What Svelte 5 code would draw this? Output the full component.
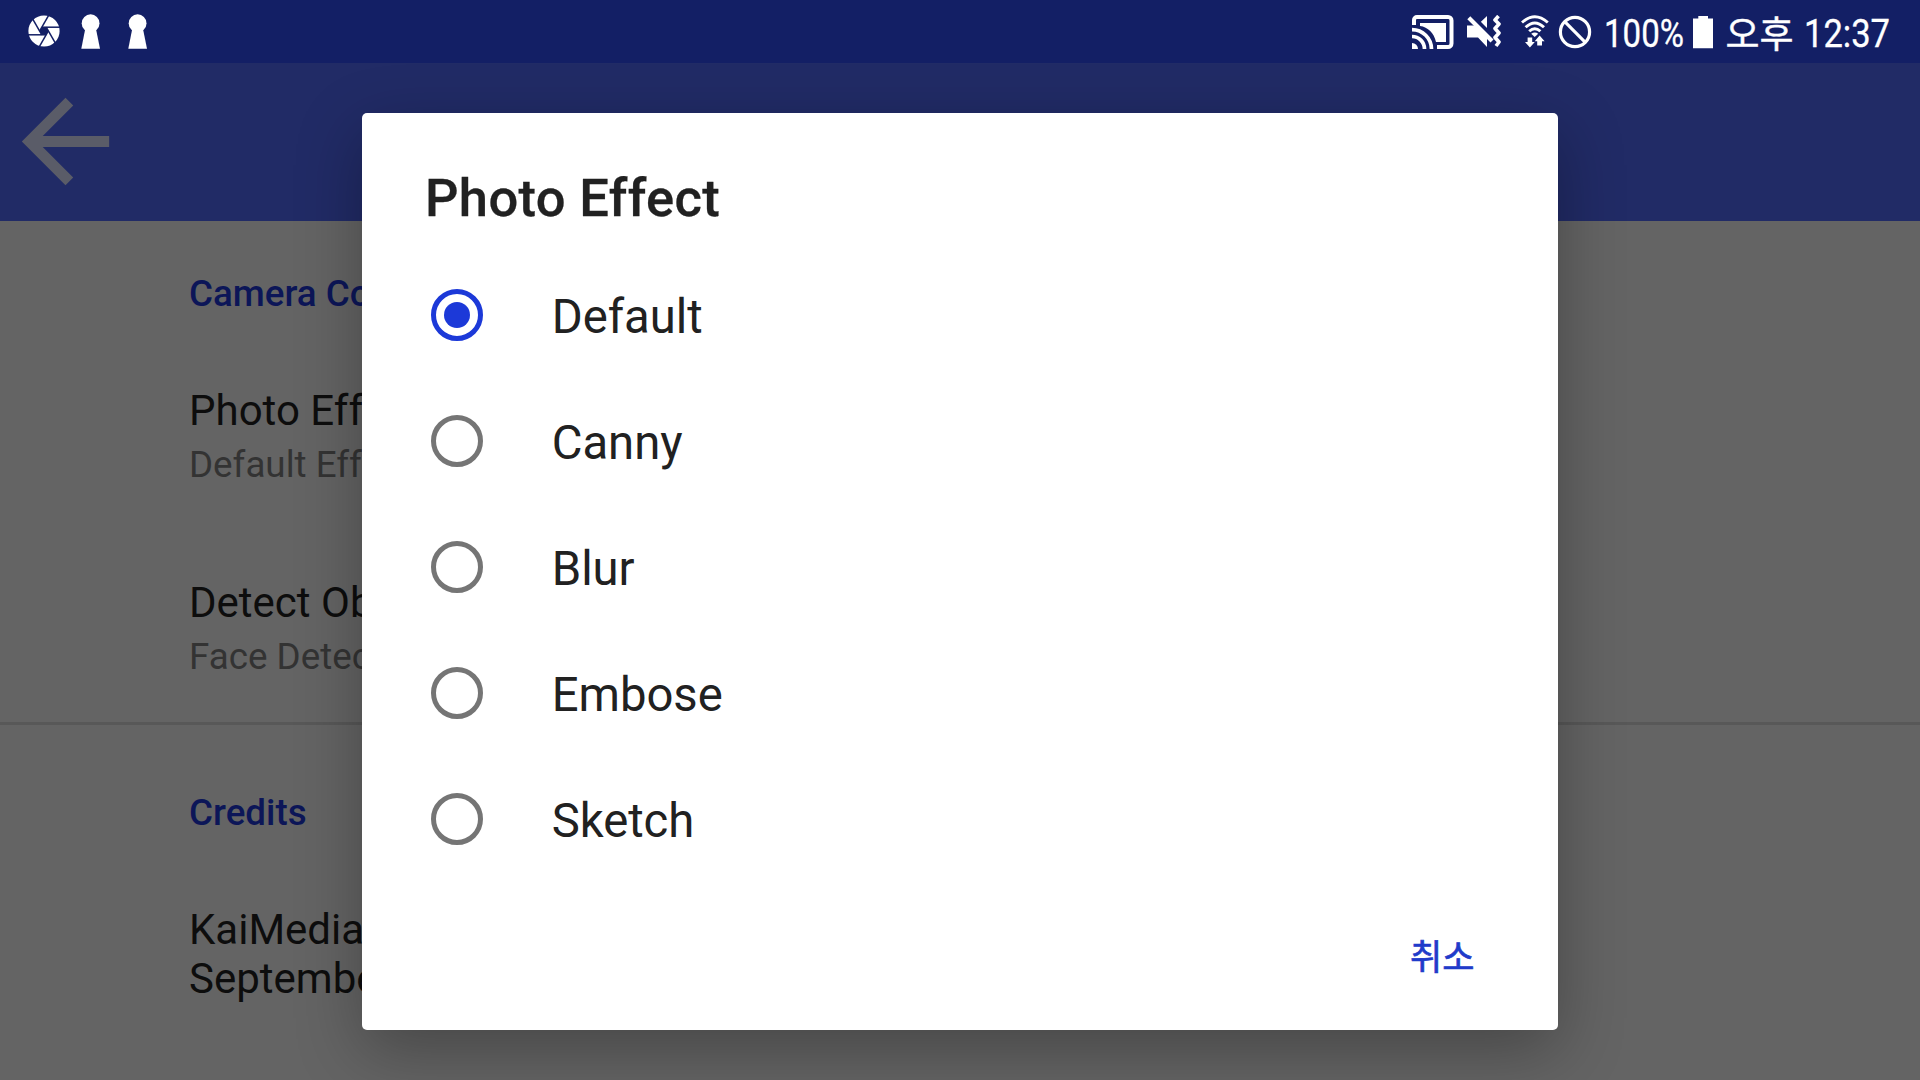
<script>
  const effects = ['Default', 'Canny', 'Blur', 'Embose', 'Sketch'];
  let selected = $state('Default');
</script>

<div class="screen">
  <header class="status">
    <svg class="aperture" width="32" height="32" viewBox="-16 -16 32 32">
      <circle r="15.6" fill="#fff" />
      <polygon points="4.4,0 2.2,3.8 -2.2,3.8 -4.4,0 -2.2,-3.8 2.2,-3.8" fill="#131f65" />
      <g stroke="#131f65" stroke-width="1.5">
        {#each [0, 60, 120, 180, 240, 300] as angle}
          <path d="M-2.2 -3.8H17" transform="rotate({angle})" />
        {/each}
      </g>
    </svg>
    {#each [1, 2] as n (n)}
      <svg class="keyhole" width="20" height="36" viewBox="0 0 20 36" fill="#fff">
        <circle cx="9.6" cy="9.2" r="8.9" />
        <path d="M4.4 14H14.8L19 34.7H.3Z" />
      </svg>
    {/each}
    <span class="spacer"></span>
    <svg class="cast" width="42" height="36" viewBox="0 0 42 36" fill="none" stroke="#fff">
      <path d="M2 10V5a3 3 0 0 1 3-3H36a3.5 3.5 0 0 1 3.5 3.5V28.5A3.5 3.5 0 0 1 36 32H25" stroke-width="4" />
      <path d="M8 8H34V27H24C22 18 16 12 8 11Z" fill="#fff" stroke="none" />
      <path d="M0 14.6A19.6 19.6 0 0 1 19.5 34M0 21.5A12.5 12.5 0 0 1 12.5 34" stroke-width="3.7" />
      <path d="M0 28A6 6 0 0 1 6 34H0Z" fill="#fff" stroke="none" />
    </svg>
    <svg class="mute" width="36" height="34" viewBox="0 0 36 34">
      <path d="M0 10.5H10L20 1V32L11 22.5H0Z" fill="#fff" />
      <path d="M2.5 -1.6L28.5 24.4" stroke="#131f65" stroke-width="4.2" />
      <path d="M1.8 2.8L25 26" stroke="#fff" stroke-width="4.2" />
      <path d="M31.5 1L28 5L32 9L28 13.5L32 18L28 22.5L32 27L29 31" fill="none" stroke="#fff" stroke-width="3.6" stroke-linejoin="round" />
    </svg>
    <svg class="wifi" width="28" height="34" viewBox="0 0 28 34" fill="none" stroke="#fff" stroke-width="2.9">
      <path d="M1 7.5Q13.8 -4 26.8 7.5M4.6 12.2Q13.8 3.6 23 12.2M8.2 16.3Q13.8 11 19.4 16.3" />
      <path d="M10.2 18.8Q13.8 16 17.2 18.8L13.7 22Z" fill="#fff" stroke="none" />
      <path d="M6.6 22.5H11.2V27H13.8L8.9 32.5L4 27H6.6ZM16.2 30.5H21V26.2H23.6L18.6 20.5L13.7 26.2H16.2Z" fill="#fff" stroke="none" />
    </svg>
    <svg class="blocked" width="34" height="34" viewBox="-17 -17 34 34" fill="none" stroke="#fff" stroke-width="3.2">
      <circle r="14.6" /><path d="M-10.3 -10.3L10.3 10.3" />
    </svg>
    <svg class="percent" width="80" height="48" viewBox="0 0 80 48">
      <text x="0" y="32" textLength="80" lengthAdjust="spacingAndGlyphs">100%</text>
    </svg>
    <svg class="battery" width="20" height="33" viewBox="0 0 20 33">
      <path d="M5.3 0H15V2.5H20V32.3H0V2.5H5.3Z" fill="#fff" />
    </svg>
    <span class="meridiem">오후</span>
    <svg class="time" width="86" height="48" viewBox="0 0 86 48">
      <text x="0" y="32" textLength="86" lengthAdjust="spacingAndGlyphs">12:37</text>
    </svg>
  </header>

  <div class="toolbar">
    <svg width="131" height="131" viewBox="0 0 24 24">
      <path d="M20 11H7.83l5.59-5.59L12 4l-8 8 8 8 1.41-1.41L7.83 13H20z" fill="#5a5c68" />
    </svg>
  </div>

  <main class="prefs">
    <section class="camera">
      <h2>Camera Control</h2>
      <div class="pref">
        <div class="name">Photo Effect</div>
        <div class="summary">Default Effect</div>
      </div>
      <div class="pref">
        <div class="name">Detect Object</div>
        <div class="summary">Face Detection</div>
      </div>
    </section>
    <section class="credits">
      <h2>Credits</h2>
      <div class="pref">
        <div class="name">KaiMedia</div>
        <div class="name">September</div>
      </div>
    </section>
  </main>

  <div class="dialog" role="dialog" aria-label="Photo Effect">
    <h1>Photo Effect</h1>
    <div class="options">
      {#each effects as effect (effect)}
        <button class="option" class:on={selected === effect} onclick={() => (selected = effect)}>
          <span class="radio"></span>
          <span class="label">{effect}</span>
        </button>
      {/each}
    </div>
    <div class="actions"><button class="cancel">취소</button></div>
  </div>
</div>

<style>
  :global(body) { background: #646464; overflow: hidden; }
  * { box-sizing: border-box; }
  .screen {
    position: relative;
    width: 1920px;
    height: 1080px;
    overflow: hidden;
    display: flex;
    flex-direction: column;
    background: #646464;
    font-family: Roboto, "Noto Sans CJK KR", sans-serif;
  }
  svg { display: block; flex: none; }
  h1, h2 { margin: 0; font-weight: 500; }
  button { border: 0; background: none; padding: 0; font: inherit; text-align: left; }

  .status {
    flex: none;
    height: 63px;
    display: flex;
    align-items: flex-start;
    background: #131f65;
    padding: 14px 30px 0 27.5px;
  }
  .status text { font-size: 38.5px; fill: #fff; stroke: #fff; stroke-width: .3px; }
  .percent, .time { overflow: visible; }
  .spacer { flex: 1; }
  .aperture { margin: 1.4px 21px 0 0; }
  .keyhole { margin-right: 27px; }
  .cast { margin: 1px 13px 0 0; }
  .mute { margin: 1px 18px 0 0; }
  .wifi { margin: 1px 9px 0 0; }
  .blocked { margin: .5px 12px 0 0; }
  .percent { margin: 1px 9px 0 0; }
  .battery { margin: 1.5px 12.5px 0 0; }
  .meridiem {
    width: 68px;
    margin: -2px 10.5px 0 0;
    color: #fff;
    font: 37px/40px "Noto Sans CJK KR", sans-serif;
    -webkit-text-stroke: .4px #fff;
    white-space: nowrap;
  }
  .time { margin-top: 1px; }

  .toolbar { flex: none; height: 158px; padding-top: 13px; background: #212b66; }

  .prefs { flex: 1; }
  .prefs section { padding-left: 189px; }
  h2 { font-size: 36.75px; line-height: 43px; color: #0c1658; }
  .camera { height: 504px; padding-top: 51px; border-bottom: 3px solid #585858; }
  .credits { padding-top: 66px; }
  .pref { margin-top: 71px; }
  .pref + .pref { margin-top: 92px; }
  .name { font-size: 42px; line-height: 49px; color: #0d0d0d; }
  .summary { margin-top: 8px; font-size: 36.75px; line-height: 43px; color: #333; }

  .dialog {
    position: absolute;
    left: 362px;
    top: 113px;
    width: 1196px;
    height: 917px;
    display: flex;
    flex-direction: column;
    padding-top: 54px;
    border-radius: 5px;
    background: #fff;
    box-shadow: 0 20px 66px rgba(0, 0, 0, .3);
  }
  h1 {
    padding-left: 63px;
    font-size: 52.5px;
    line-height: 62px;
    letter-spacing: .35px;
    color: #212121;
    -webkit-text-stroke: .3px #212121;
  }
  .options { display: flex; flex-direction: column; margin-top: 23px; }
  .option {
    height: 126px;
    display: flex;
    align-items: center;
    gap: 68.5px;
    padding-left: 68.75px;
  }
  .radio {
    width: 52.5px;
    height: 52.5px;
    display: grid;
    place-items: center;
    border: 5.25px solid #757575;
    border-radius: 50%;
  }
  .on .radio { border-color: #1c39d8; }
  .on .radio::after { content: ""; width: 26px; height: 26px; border-radius: 50%; background: #1c39d8; }
  .label { padding-top: 4px; font-size: 47.25px; line-height: 56px; letter-spacing: -.05px; color: #212121; }
  .actions { display: flex; justify-content: flex-end; padding: 46px 83.5px 0 0; }
  .cancel {
    color: #1f3bca;
    font: 400 35px/54px "Noto Sans CJK KR", sans-serif;
    -webkit-text-stroke: .7px #1f3bca;
  }
</style>
